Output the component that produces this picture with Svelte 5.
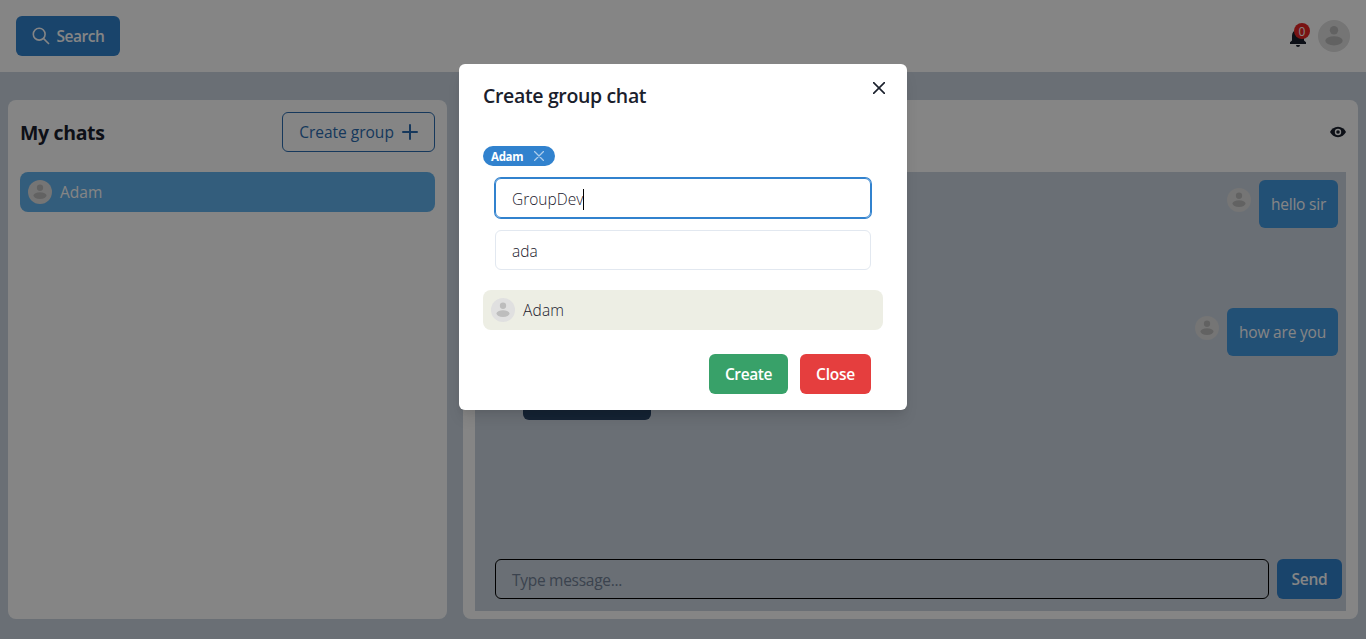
<script>
  const messages = ['hello sir', 'how are you'];
</script>

{#snippet avatar(size)}
  <svg class="avatar" width={size} height={size} viewBox="0 0 32 32" aria-hidden="true">
    <circle cx="16" cy="16" r="16" fill="#e0e0e0" />
    <circle cx="16" cy="10.3" r="4.2" fill="#bdbdbd" />
    <ellipse cx="16" cy="20.8" rx="8.7" ry="4.6" fill="#bdbdbd" />
  </svg>
{/snippet}

<div class="page">
  <header class="topbar">
    <button class="btn blue search">
      <svg width="18" height="18" viewBox="0 0 18 18" fill="none" stroke="currentColor" stroke-width="1.6"><circle cx="7.2" cy="7.2" r="5.9" /><path d="M11.4 11.4L17 17" /></svg>
      <span class="t-search">Search</span>
    </button>
    <div class="account">
      <span class="bell">
        <svg width="16" height="20" viewBox="0 0 16 20" fill="#1a202c"><path d="M0 17V15.3L2 13.5V9C2 5.8 3.6 3.3 6.4 2.7V2a1.6 1.6 0 0 1 3.2 0v.7C12.4 3.3 14 5.8 14 9v4.5l2 1.8V17zM6 18h4a2 2 0 0 1-4 0z" /></svg>
        <span class="badge">0</span>
      </span>
      {@render avatar(32)}
    </div>
  </header>

  <main class="content">
    <section class="panel chats">
      <div class="chats-head">
        <h2>My chats</h2>
        <button class="btn outline">
          <span class="t-group">Create group</span>
          <svg width="16" height="16" viewBox="0 0 16 16" fill="none" stroke="currentColor" stroke-width="2" stroke-linecap="round"><path d="M8 1v14M1 8h14" /></svg>
        </button>
      </div>
      <div class="chat-row">{@render avatar(24)}<span>Adam</span></div>
    </section>

    <section class="panel conversation">
      <div class="conv-head">
        <svg width="16" height="12" viewBox="0 0 16 12"><path d="M8 .8C4.4.8 1.6 2.9 0 6c1.6 3.1 4.4 5.2 8 5.2s6.4-2.1 8-5.2C14.4 2.9 11.6.8 8 .8z" fill="#1a202c" /><circle cx="8" cy="6" r="3.2" fill="#fff" /><circle cx="8" cy="6" r="1.8" fill="#1a202c" /></svg>
      </div>
      <div class="thread">
        <div class="messages">
          {#each messages as message, i}
            <div class="mine">{@render avatar(24)}<span class="bubble m{i}">{message}</span></div>
          {/each}
          <div class="theirs"></div>
        </div>
        <div class="composer">
          <div class="message-input">Type message...</div>
          <button class="btn blue send"><span class="t-close">Send</span></button>
        </div>
      </div>
    </section>
  </main>
</div>

<div class="overlay">
  <div class="modal" role="dialog" aria-modal="true">
    <div class="modal-head">
      <h3>Create group chat</h3>
      <svg class="close-x" width="12" height="12" viewBox="0 0 12 12" fill="none" stroke="#1a202c" stroke-width="1.6" stroke-linecap="round"><path d="M.6.6l10.8 10.8M11.4.6L.6 11.4" /></svg>
    </div>
    <div class="modal-body">
      <div class="tag"><span class="t-tag">Adam</span><svg width="10" height="10" viewBox="0 0 10 10" fill="none" stroke="#fff" stroke-width="1.3" stroke-linecap="round" opacity=".6"><path d="M.5.5l9 9M9.5.5l-9 9" /></svg></div>
      <div class="field focused"><span>GroupDev</span><i class="caret"></i></div>
      <div class="field"><span>ada</span></div>
      <div class="result">{@render avatar(24)}<span>Adam</span></div>
    </div>
    <div class="modal-foot">
      <button class="btn green"><span class="t-create">Create</span></button>
      <button class="btn red"><span class="t-close">Close</span></button>
    </div>
  </div>
</div>

<style>
  :global(body) { margin: 0; overflow: hidden; }
  * { box-sizing: border-box; }
  .page { height: 639px; display: flex; flex-direction: column; background: #cbd5e0; }
  .page, .overlay { font: 400 15.5px/24px "Open Sans", "Noto Sans", sans-serif; color: #1a202c; }
  svg { display: block; flex: none; }
  span { white-space: nowrap; }
  h2, h3 { margin: 0; white-space: nowrap; }
  .topbar { height: 72px; background: #fff; padding: 0 16px; display: flex; align-items: center; justify-content: space-between; }
  .btn { font: 600 15.5px/24px "Open Sans", "Noto Sans", sans-serif; height: 40px; border: 0; border-radius: 6px; padding: 0; display: flex; align-items: center; justify-content: center; color: #fff; flex: none; }
  .blue { background: #3182ce; }
  .green { background: #38a169; width: 79px; }
  .red { background: #e53e3e; width: 71px; }
  .search { width: 104px; gap: 7px; }
  .t-search { letter-spacing: -.45px; }
  .t-create { letter-spacing: -.4px; }
  .t-close { letter-spacing: -.25px; }
  .account { display: flex; align-items: center; gap: 12px; }
  .bell { position: relative; padding-top: 2px; }
  .badge { position: absolute; left: 4px; top: -2px; width: 16px; height: 16px; border-radius: 50%; background: #e82626; color: #fff; font: 12px/17px "Open Sans", sans-serif; text-align: center; }
  .content { flex: 1; display: flex; gap: 16px; padding: 28px 8px 20px; }
  .panel { background: #fff; border-radius: 8px; padding: 12px; }
  .chats { width: 439px; }
  .chats-head { display: flex; align-items: center; justify-content: space-between; height: 40px; margin-bottom: 20px; }
  h2 { font-size: 19.5px; line-height: 30px; font-weight: 700; letter-spacing: -.35px; padding-top: 2px; }
  .outline { width: 153px; background: transparent; border: 1px solid #2b6cb0; color: #2b6cb0; font-weight: 500; gap: 8px; }
  .chat-row { height: 40px; border-radius: 8px; background: #63b3ed; color: #fff; display: flex; align-items: center; padding: 0 8px; gap: 8px; }
  .conversation { flex: 1; padding: 0 12px 8px; display: flex; flex-direction: column; }
  .conv-head { height: 72px; padding-top: 26px; display: flex; justify-content: flex-end; }
  .thread { flex: 1; background: #cbd5e0; display: flex; flex-direction: column; padding: 8px 4px 12px 20px; }
  .messages { flex: 1; padding-right: 4px; }
  .mine { display: flex; justify-content: flex-end; gap: 8px; height: 48px; margin-bottom: 80px; }
  .mine .avatar { margin-top: 8px; }
  .mine + .mine { margin-bottom: 16px; }
  .bubble { background: #4299e1; color: #fff; border-radius: 6px; padding: 12px 0; width: 79px; text-align: center; letter-spacing: -.2px; }
  .m1 { width: 111px; }
  .theirs { width: 128px; height: 48px; margin-left: 28px; border-radius: 6px; background: #2a4365; }
  .composer { display: flex; gap: 8px; }
  .message-input { flex: 1; height: 40px; border: 1px solid #000; border-radius: 6px; padding: 8px 16px; color: #718096; letter-spacing: -.28px; }
  .send { width: 65px; }
  .overlay { position: absolute; inset: 0; background: rgba(0, 0, 0, .48); display: flex; align-items: flex-start; justify-content: center; padding-top: 64px; }
  .modal { width: 448px; height: 346px; background: #fff; border-radius: 6px; box-shadow: 0 10px 15px -3px rgba(0, 0, 0, .1), 0 4px 6px -2px rgba(0, 0, 0, .05); display: flex; flex-direction: column; }
  .modal-head { height: 82px; padding: 16px 22px 0 24px; display: flex; justify-content: space-between; }
  h3 { font-size: 19.5px; line-height: 31px; font-weight: 550; letter-spacing: -.35px; }
  .close-x { margin-top: 2px; }
  .modal-body { padding: 0 24px; }
  .tag { width: 72px; height: 20px; border-radius: 10px; background: #3182ce; color: #fff; font: 700 11.5px/20px "Open Sans", "Noto Sans", sans-serif; display: flex; align-items: center; justify-content: space-between; padding: 0 11px 0 8px; margin-bottom: 12px; }
  .t-tag { letter-spacing: -.3px; padding-top: 1px; }
  .field { height: 40px; margin: 0 12px 12px; border: 1px solid #e2e8f0; border-radius: 6px; padding: 2px 16px 0; display: flex; align-items: center; font-weight: 350; }
  .focused { border-color: #3182ce; box-shadow: 0 0 0 1px #3182ce; }
  .caret { width: 1px; height: 21px; background: #000; }
  .result { margin-top: 20px; height: 40px; border-radius: 8px; background: #edeee4; display: flex; align-items: center; gap: 8px; padding: 0 8px; font-weight: 350; letter-spacing: .2px; }
  .modal-foot { margin-top: auto; padding: 16px 36px 16px; display: flex; justify-content: flex-end; gap: 12px; }
</style>
